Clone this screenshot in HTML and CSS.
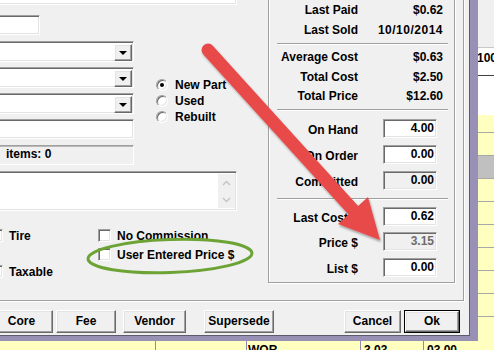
FILE: index.html
```html
<!DOCTYPE html>
<html>
<head>
<meta charset="utf-8">
<link rel="stylesheet" href="styles.css">
</head>
<body>
<div class="desk">
  <div class="sheet">
    <div class="sheet-top">
      <div class="under"></div>
      <div class="side">
        <div class="side-bar"></div>
        <div class="side-box"><span class="side-num">100</span></div>
        <div class="side-white"></div>
        <div class="srow first"></div>
        <div class="srow"></div>
        <div class="srow grey"></div>
        <div class="srow"></div>
        <div class="srow"></div>
        <div class="srow"></div>
        <div class="srow"></div>
        <div class="srow"></div>
        <div class="srow"></div>
      </div>
    </div>
    <div class="sheet-row">
      <div class="cell c1"></div>
      <div class="cell c2"></div>
      <div class="cell c3">WOR</div>
      <div class="cell c4">3.03</div>
      <div class="cell c5">03.00</div>
    </div>
  </div>

  <div class="dialog">
    <div class="client">
      <div class="main">
        <div class="left">
          <div class="sunk tb-top"></div>
          <div class="sunk tb-small"></div>
          <div class="mid">
            <div class="fields">
              <div class="sunk combo"><div class="raised drop"><span class="tri"></span></div></div>
              <div class="sunk combo"><div class="raised drop"><span class="tri"></span></div></div>
              <div class="sunk combo"><div class="raised drop"><span class="tri"></span></div></div>
              <div class="sunk tb-mid"></div>
              <div class="static">items: 0</div>
            </div>
            <div class="radios">
              <div class="radio-row"><span class="radio on"></span><span>New Part</span></div>
              <div class="radio-row"><span class="radio"></span><span>Used</span></div>
              <div class="radio-row"><span class="radio"></span><span>Rebuilt</span></div>
            </div>
          </div>
          <div class="sunk memo">
            <div class="memo-scroll">
              <svg width="9" height="6" viewBox="0 0 9 6"><path d="M1 5 L4.5 1.5 L8 5" fill="none" stroke="#c4c4c4" stroke-width="1.4"/></svg>
              <svg width="9" height="6" viewBox="0 0 9 6"><path d="M1 1 L4.5 4.5 L8 1" fill="none" stroke="#c4c4c4" stroke-width="1.4"/></svg>
            </div>
          </div>
          <div class="checks">
            <div class="check tire"><span class="cbox"></span><span>Tire</span></div>
            <div class="check nocom"><span class="cbox"></span><span>No Commission</span></div>
            <div class="check user"><span class="cbox"></span><span>User Entered Price $</span></div>
            <div class="check tax"><span class="cbox"></span><span>Taxable</span></div>
          </div>
        </div>

        <div class="group">
          <div class="row t20"><span class="lbl">Last Paid</span><span class="val">$0.62</span></div>
          <div class="row t20"><span class="lbl">Last Sold</span><span class="val num">10/10/2014</span></div>
          <div class="sep s1"></div>
          <div class="row t20"><span class="lbl">Average Cost</span><span class="val">$0.63</span></div>
          <div class="row t20"><span class="lbl">Total Cost</span><span class="val">$2.50</span></div>
          <div class="row t19"><span class="lbl">Total Price</span><span class="val">$12.60</span></div>
          <div class="sep s2"></div>
          <div class="row in m8"><span class="lbl">On Hand</span><span class="sunk inp">4.00</span></div>
          <div class="row in m7"><span class="lbl">On Order</span><span class="sunk inp">0.00</span></div>
          <div class="row in m7"><span class="lbl">Committed</span><span class="sunk inp ro">0.00</span></div>
          <div class="sep s3"></div>
          <div class="row in m7"><span class="lbl">Last Cost $</span><span class="sunk inp">0.62</span></div>
          <div class="row in m6"><span class="lbl">Price $</span><span class="sunk inp dis">3.15</span></div>
          <div class="row in m7"><span class="lbl">List $</span><span class="sunk inp">0.00</span></div>
        </div>
      </div>

      <div class="buttons">
        <div class="raised btn b-core">Core</div>
        <div class="raised btn b-fee">Fee</div>
        <div class="raised btn b-vendor">Vendor</div>
        <div class="raised btn b-super">Supersede</div>
        <div class="raised btn b-cancel">Cancel</div>
        <div class="okwrap"><div class="raised btn b-ok">Ok</div></div>
      </div>
    </div>
  </div>

  <svg class="marks" width="494" height="350" viewBox="0 0 494 350">
    <defs>
      <filter id="sh" x="-20%" y="-20%" width="140%" height="140%">
        <feDropShadow dx="1" dy="2" stdDeviation="1.2" flood-color="#000" flood-opacity="0.35"/>
      </filter>
    </defs>
    <ellipse cx="170" cy="256" rx="82" ry="16.5" fill="none" stroke="#6ca334" stroke-width="3" transform="rotate(-2 170 256)"/>
    <g filter="url(#sh)">
      <line x1="208" y1="50" x2="354" y2="211" stroke="#e84a49" stroke-width="13" stroke-linecap="round"/>
      <polygon points="380,240 368,197 338,224" fill="#e84a49"/>
    </g>
  </svg>
</div>
</body>
</html>
```

FILE: styles.css
```css
* { box-sizing: border-box; }
html, body { margin: 0; padding: 0; }
body {
  font: bold 12px "Liberation Sans", Arial, sans-serif;
  color: #000;
  background: #fff;
}

.desk {
  position: relative;
  width: 494px;
  height: 350px;
  overflow: hidden;
  background: #ffffbf;
}

/* background spreadsheet */
.sheet { display: flex; flex-direction: column; height: 350px; }
.sheet-top { display: flex; height: 341px; }
.under { flex: 1; }
.side { width: 16px; display: flex; flex-direction: column; overflow: hidden; }
.side-bar { height: 47px; background: #f0f0f0; flex: none; }
.side-box {
  height: 29px; flex: none;
  background: #fff;
  border-top: 1px solid #c8c8c8;
  border-bottom: 1px solid #404040;
  padding-top: 3px;
  line-height: 14px;
  white-space: nowrap;
}
.side-num { margin-left: -1px; }
.side-white { height: 39px; background: #fff; flex: none; }
.srow { height: 23px; flex: none; border-bottom: 1px solid #a8a8a8; }
.srow.first { height: 18px; }
.srow.grey { background: #c0c0c0; }

.sheet-row {
  display: grid;
  grid-template-columns: 155px 91px 114px 63px 1fr;
  height: 9px;
  line-height: 18px;
  overflow: hidden;
}
.cell { border-left: 1px solid #8c8ca8; white-space: nowrap; overflow: hidden; }
.c1 { border-left: none; }
.c3 { padding-left: 1px; }
.c4 { padding-left: 3px; }
.c5 { padding-left: 3px; }

/* dialog window */
.dialog {
  position: absolute;
  left: -30px;
  top: -30px;
  background: #9891b5;
  padding: 0 8px 5px 0;
}
.client {
  width: 500px;
  height: 366px;
  background: #f0f0f0;
  border-right: 1px solid #5a5a6a;
  border-bottom: 1px solid #5a5a6a;
  display: flex;
  flex-direction: column;
}

.sunk {
  border: 1px solid;
  border-color: #a0a0a0 #fff #fff #a0a0a0;
  box-shadow: inset 1px 1px #696969, inset -1px -1px #e3e3e3;
  background: #fff;
}
.raised {
  border: 1px solid;
  border-color: #fff #696969 #696969 #fff;
  box-shadow: inset -1px -1px #a0a0a0, inset 1px 1px #e3e3e3;
  background: #f0f0f0;
}

.main {
  display: flex;
  align-items: flex-start;
  width: 494px;
  height: 331px;
  flex: none;
  padding-left: 20px;
  border-right: 1px solid #a0a0a0;
  border-bottom: 1px solid #a0a0a0;
  box-shadow: 1px 1px 0 #fff;
}

.left { width: 247px; margin-top: 10px; display: flex; flex-direction: column; flex: none; }
.tb-top { height: 25px; }
.tb-small { height: 20px; width: 50px; margin-top: 10px; }
.mid { display: flex; margin-top: 6px; }
.fields { width: 144px; display: flex; flex-direction: column; gap: 5px; flex: none; }
.combo { height: 21px; display: flex; justify-content: flex-end; padding: 1px 1px 1px 0; }
.drop { width: 18px; height: 17px; display: flex; align-items: center; justify-content: center; margin-top: 1px; }
.tri {
  width: 0; height: 0;
  border-left: 4px solid transparent;
  border-right: 4px solid transparent;
  border-top: 4px solid #000;
  margin-top: 1px;
}
.tb-mid { height: 20px; }
.static {
  height: 20px;
  margin-top: 1px;
  border: 1px solid;
  border-color: #a0a0a0 #fff #fff #a0a0a0;
  box-shadow: inset 0 1px #b8b8b8;
  padding-left: 15px;
  line-height: 17px;
}

.radios { margin-left: 22px; margin-top: 36px; display: flex; flex-direction: column; }
.radio-row { height: 16px; display: flex; align-items: center; gap: 7px; }
.radio {
  width: 12px; height: 12px;
  border-radius: 50%;
  border: 1px solid;
  border-color: #a0a0a0 #fff #fff #a0a0a0;
  box-shadow: inset 1px 1px #696969, inset -1px -1px #e3e3e3;
  background: #fff;
  display: flex; align-items: center; justify-content: center;
  flex: none;
}
.radio.on::after {
  content: "";
  width: 4px; height: 4px;
  border-radius: 50%;
  background: #000;
}

.memo { height: 40px; margin-top: 6px; display: flex; justify-content: flex-end; padding: 2px 1px 2px 0; }
.memo-scroll {
  width: 17px;
  background: #f0f0f0;
  display: flex; flex-direction: column;
  align-items: center; justify-content: space-between;
  padding: 6px 0 5px;
}
.memo-scroll svg { display: block; }

.checks {
  display: grid;
  grid-template-columns: 108px 1fr;
  grid-template-rows: 19px 17px 13px;
  margin-top: 18px;
}
.check { display: flex; align-items: center; gap: 6px; height: 13px; white-space: nowrap; }
.cbox {
  width: 13px; height: 13px; flex: none;
  border: 1px solid;
  border-color: #a0a0a0 #fff #fff #a0a0a0;
  box-shadow: inset 1px 1px #696969, inset -1px -1px #e3e3e3;
  background: #fff;
}
.tire { grid-column: 1; grid-row: 1; }
.nocom { grid-column: 2; grid-row: 1; }
.user { grid-column: 2; grid-row: 2; }
.tax { grid-column: 1; grid-row: 3; }

/* right group box */
.group {
  width: 187px;
  margin-left: 31px;
  margin-top: 5px;
  padding: 24px 0 5px;
  border: 1px solid #a0a0a0;
  box-shadow: inset 1px 1px #fff, 1px 1px 0 #fff;
  display: flex;
  flex-direction: column;
  flex: none;
}
.row { display: flex; align-items: center; white-space: nowrap; }
.t20 { height: 20px; line-height: 20px; }
.t19 { height: 19px; line-height: 19px; }
.lbl { width: 89px; text-align: right; flex: none; }
.val { width: 85px; text-align: right; flex: none; }
.num { letter-spacing: 0.5px; }
.row.in { height: 19px; }
.row.in .lbl { padding-top: 2px; }
.m8 { margin-top: 8px; }
.m7 { margin-top: 7px; }
.m6 { margin-top: 6px; }
.inp {
  width: 54px; height: 19px;
  margin-left: 25px;
  text-align: right;
  padding-right: 2px;
  line-height: 17px;
  flex: none;
}
.inp.ro { background: #f0f0f0; }
.inp.dis { background: #f0f0f0; color: #6d6d6d; }

.sep {
  width: 171px;
  margin-left: 8px;
  height: 2px;
  border-top: 1px solid #a0a0a0;
  border-bottom: 1px solid #fff;
  flex: none;
}
.s1 { margin-top: 3px; margin-bottom: 2px; }
.s2 { margin-top: 3px; }
.s3 { margin-top: 8px; }

/* bottom buttons */
.buttons { display: flex; align-items: flex-start; margin-top: 9px; padding-left: 20px; }
.btn {
  height: 23px;
  line-height: 21px;
  text-align: center;
  flex: none;
}
.b-core { width: 63px; }
.b-fee { width: 60px; margin-left: 3px; }
.b-vendor { width: 63px; margin-left: 7px; }
.b-super { width: 70px; margin-left: 18px; }
.b-cancel { width: 57px; margin-left: 70px; }
.okwrap { margin-left: 3px; border: 1px solid #000; height: 23px; }
.b-ok { width: 54px; height: 21px; line-height: 19px; }

.marks { position: absolute; left: 0; top: 0; pointer-events: none; }
```
